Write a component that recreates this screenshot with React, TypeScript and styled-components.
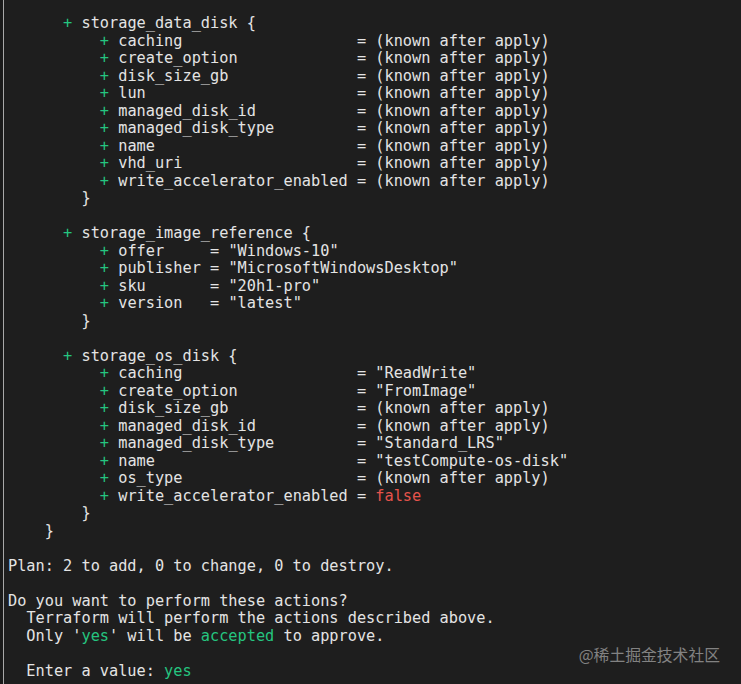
import React from "react";
import styled, { createGlobalStyle } from "styled-components";

const Global = createGlobalStyle`
  html, body { margin: 0; padding: 0; background: #1e1e1e; }
  body { width: 741px; height: 684px; overflow: hidden; }
`;

const Screen = styled.div`
  position: relative;
  width: 741px;
  height: 684px;
  box-sizing: border-box;
  background: #1e1e1e;
  display: flex;
`;

const Edge = styled.div`
  width: 3px;
  flex: none;
  background: #1a1a1a;
  border-right: 1px solid #a8a8a8;
`;

const Terminal = styled.pre`
  margin: 0;
  padding: 15px 0 0 4px;
  font-family: "DejaVu Sans Mono", monospace;
  font-size: 15.25px;
  line-height: 17.5px;
  color: #e4e4e4;
  white-space: pre;
`;

const Line = styled.div`
  height: 17.5px;
`;

const Tone = styled.span<{ $tone: "green" | "red" }>`
  color: ${(p) => (p.$tone === "green" ? "#25c580" : "#e5534b")};
`;

const Watermark = styled.div`
  position: absolute;
  right: 21px;
  top: 643px;
  font-family: "Noto Sans CJK SC", "Noto Sans", sans-serif;
  font-size: 15.8px;
  line-height: 24px;
  color: #828282;
`;

const G = ({ children }: { children: React.ReactNode }) => <Tone $tone="green">{children}</Tone>;

type Row = { indent: number; plus?: boolean; text: string; value?: React.ReactNode };

const known = "(known after apply)";

const rows: (Row | null)[] = [
  { indent: 6, plus: true, text: "storage_data_disk {" },
  { indent: 10, plus: true, text: "caching                   = ", value: known },
  { indent: 10, plus: true, text: "create_option             = ", value: known },
  { indent: 10, plus: true, text: "disk_size_gb              = ", value: known },
  { indent: 10, plus: true, text: "lun                       = ", value: known },
  { indent: 10, plus: true, text: "managed_disk_id           = ", value: known },
  { indent: 10, plus: true, text: "managed_disk_type         = ", value: known },
  { indent: 10, plus: true, text: "name                      = ", value: known },
  { indent: 10, plus: true, text: "vhd_uri                   = ", value: known },
  { indent: 10, plus: true, text: "write_accelerator_enabled = ", value: known },
  { indent: 8, text: "}" },
  null,
  { indent: 6, plus: true, text: "storage_image_reference {" },
  { indent: 10, plus: true, text: "offer     = ", value: '"Windows-10"' },
  { indent: 10, plus: true, text: "publisher = ", value: '"MicrosoftWindowsDesktop"' },
  { indent: 10, plus: true, text: "sku       = ", value: '"20h1-pro"' },
  { indent: 10, plus: true, text: "version   = ", value: '"latest"' },
  { indent: 8, text: "}" },
  null,
  { indent: 6, plus: true, text: "storage_os_disk {" },
  { indent: 10, plus: true, text: "caching                   = ", value: '"ReadWrite"' },
  { indent: 10, plus: true, text: "create_option             = ", value: '"FromImage"' },
  { indent: 10, plus: true, text: "disk_size_gb              = ", value: known },
  { indent: 10, plus: true, text: "managed_disk_id           = ", value: known },
  { indent: 10, plus: true, text: "managed_disk_type         = ", value: '"Standard_LRS"' },
  { indent: 10, plus: true, text: "name                      = ", value: '"testCompute-os-disk"' },
  { indent: 10, plus: true, text: "os_type                   = ", value: known },
  { indent: 10, plus: true, text: "write_accelerator_enabled = ", value: <Tone $tone="red">false</Tone> },
  { indent: 8, text: "}" },
  { indent: 4, text: "}" },
  null,
  { indent: 0, text: "Plan: 2 to add, 0 to change, 0 to destroy." },
  null,
  { indent: 0, text: "Do you want to perform these actions?" },
  { indent: 2, text: "Terraform will perform the actions described above." },
];

export default function App() {
  return (
    <Screen>
      <Global />
      <Edge />
      <Terminal>
        {rows.map((r, i) =>
          r === null ? (
            <Line key={i}> </Line>
          ) : (
            <Line key={i}>
              {" ".repeat(r.indent)}
              {r.plus && <G>+ </G>}
              {r.text}
              {r.value}
            </Line>
          )
        )}
        <Line>
          {"  Only '"}
          <G>yes</G>
          {"' will be "}
          <G>accepted</G>
          {" to approve."}
        </Line>
        <Line> </Line>
        <Line>
          {"  Enter a value: "}
          <G>yes</G>
        </Line>
      </Terminal>
      <Watermark>@稀土掘金技术社区</Watermark>
    </Screen>
  );
}
